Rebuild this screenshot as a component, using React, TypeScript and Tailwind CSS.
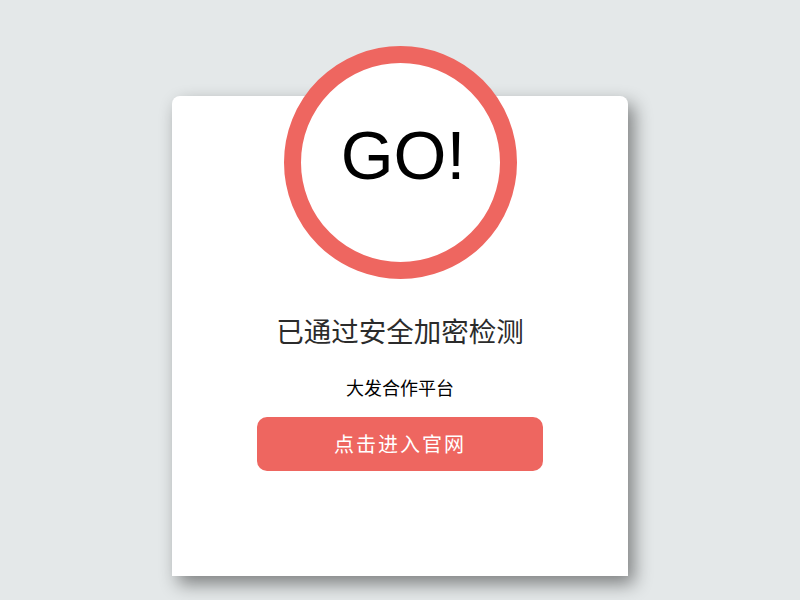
export default function App() {
  return (
    <div className="min-h-screen w-full bg-[#e4e8e9] pt-[96px] font-['Liberation_Sans','Noto_Sans_CJK_SC',sans-serif]">
      <div className="mx-auto flex h-[480px] w-[456px] flex-col items-center rounded-t-[8px] bg-white shadow-[6px_8px_18px_rgba(0,0,0,0.45)]">
        <div className="-mt-[50px] flex h-[233px] w-[233px] items-center justify-center rounded-full border-[17px] border-[#ee6660] bg-white">
          <span className="-mt-[16px] ml-[6px] text-[68px] leading-none text-black">GO!</span>
        </div>
        <h1 className="mt-[31px] text-[27.5px] leading-[40px] text-[#2b2b2b] font-['Noto_Sans_CJK_SC',sans-serif]">
          已通过安全加密检测
        </h1>
        <p className="mt-[23px] text-[18px] leading-[28px] text-black font-['Noto_Sans_CJK_SC',sans-serif]">
          大发合作平台
        </p>
        <button className="mt-[16px] flex h-[54px] w-[286px] items-center justify-center rounded-[10px] bg-[#ee6660] text-[20px] tracking-[2px] text-white font-['Noto_Sans_CJK_SC',sans-serif]">
          点击进入官网
        </button>
      </div>
    </div>
  );
}
